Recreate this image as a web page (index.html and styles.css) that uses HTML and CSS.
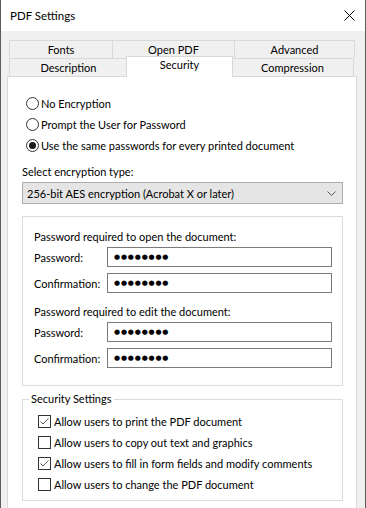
FILE: index.html
```html
<!DOCTYPE html>
<html lang="en">
<head>
    <meta charset="UTF-8">
    <meta name="viewport" content="width=device-width, initial-scale=1.0">
    <title>PDF Settings</title>
    <link rel="stylesheet" href="styles.css">
</head>
<body>
    <div class="window">
        <div class="titlebar">
            <span class="title">PDF Settings</span>
            <svg class="close" width="11" height="11" viewBox="0 0 11 11">
                <path d="M0.5 0.5 L10.5 10.5 M10.5 0.5 L0.5 10.5" stroke="#000" stroke-width="1" fill="none"/>
            </svg>
        </div>

        <div class="content">
            <div class="tab-row">
                <div class="tab tab-fonts">Fonts</div>
                <div class="tab tab-open">Open PDF</div>
                <div class="tab tab-advanced">Advanced</div>
            </div>
            <div class="tab-row">
                <div class="tab tab-description">Description</div>
                <div class="tab tab-security active">Security</div>
                <div class="tab tab-compression">Compression</div>
            </div>

            <div class="panel">
                <div class="option">
                    <span class="radio"></span>
                    <span>No Encryption</span>
                </div>
                <div class="option">
                    <span class="radio"></span>
                    <span>Prompt the User for Password</span>
                </div>
                <div class="option">
                    <span class="radio selected"></span>
                    <span>Use the same passwords for every printed document</span>
                </div>

                <div class="select-label">Select encryption type:</div>
                <div class="dropdown">
                    <span>256-bit AES encryption (Acrobat X or later)</span>
                    <svg width="9" height="5" viewBox="0 0 9 5">
                        <path d="M0.5 0.5 L4.5 4.5 L8.5 0.5" stroke="#555" stroke-width="1" fill="none"/>
                    </svg>
                </div>

                <div class="group">
                    <div class="pw-section">
                        <div class="pw-heading">Password required to open the document:</div>
                        <div class="pw-row">
                            <span class="pw-label">Password:</span>
                            <div class="field"><span class="dots">●●●●●●●●</span></div>
                        </div>
                        <div class="pw-row">
                            <span class="pw-label">Confirmation:</span>
                            <div class="field"><span class="dots">●●●●●●●●</span></div>
                        </div>
                    </div>
                    <div class="pw-section">
                        <div class="pw-heading">Password required to edit the document:</div>
                        <div class="pw-row">
                            <span class="pw-label">Password:</span>
                            <div class="field"><span class="dots">●●●●●●●●</span></div>
                        </div>
                        <div class="pw-row">
                            <span class="pw-label">Confirmation:</span>
                            <div class="field"><span class="dots">●●●●●●●●</span></div>
                        </div>
                    </div>
                </div>

                <fieldset class="settings">
                    <legend>Security Settings</legend>
                    <div class="option check-row">
                        <span class="check"><svg width="11" height="11" viewBox="0 0 11 11"><path d="M1.5 5.5 L4 8 L9.5 2.5" stroke="#5a5a5a" stroke-width="1" fill="none"/></svg></span>
                        <span>Allow users to print the PDF document</span>
                    </div>
                    <div class="option check-row">
                        <span class="check"></span>
                        <span>Allow users to copy out text and graphics</span>
                    </div>
                    <div class="option check-row">
                        <span class="check"><svg width="11" height="11" viewBox="0 0 11 11"><path d="M1.5 5.5 L4 8 L9.5 2.5" stroke="#5a5a5a" stroke-width="1" fill="none"/></svg></span>
                        <span>Allow users to fill in form fields and modify comments</span>
                    </div>
                    <div class="option check-row">
                        <span class="check"></span>
                        <span>Allow users to change the PDF document</span>
                    </div>
                </fieldset>
            </div>
        </div>
    </div>
</body>
</html>
```

FILE: styles.css
```css
* {
    box-sizing: border-box;
}

body {
    margin: 0;
    font-family: 'Lato', sans-serif;
    font-size: 11px;
    color: #000;
    background: #fff;
    white-space: nowrap;
}

.window {
    width: 366px;
    height: 508px;
    border-left: 1px solid #5c5c5c;
    border-right: 1px solid #5c5c5c;
    background: #f0f0f0;
    display: flex;
    flex-direction: column;
    overflow: hidden;
}

.titlebar {
    height: 31px;
    flex-shrink: 0;
    background: #fff;
    display: flex;
    align-items: center;
    justify-content: space-between;
    padding: 0 10px 0 9px;
    font-size: 11.5px;
}

.content {
    flex: 1;
    display: flex;
    flex-direction: column;
    padding: 9px 8px 0 6px;
}

/* tabs */
.tab-row {
    display: flex;
    height: 18px;
    padding-left: 2px;
}

.tab {
    height: 18px;
    border: 1px solid #d9d9d9;
    border-bottom: none;
    background: #f0f0f0;
    text-align: center;
    line-height: 17px;
    margin-left: -1px;
}

.tab-row .tab:first-child {
    margin-left: 0;
}

.tab-fonts { width: 104px; }
.tab-open { width: 123px; }
.tab-advanced { width: 121px; }
.tab-description { width: 119px; }
.tab-compression { width: 123px; }

.tab-security {
    width: 107px;
    margin-left: -2px;
    margin-right: -1px;
}

.tab.active {
    position: relative;
    z-index: 1;
    background: #fff;
    height: 21px;
    margin-top: -2px;
    margin-bottom: -1px;
    line-height: 16px;
    padding-bottom: 3px;
}

/* panel */
.panel {
    flex: 1;
    background: #fff;
    border: 1px solid #d9d9d9;
    border-bottom: none;
    padding: 16px 13px 0 14px;
}

.option {
    display: flex;
    align-items: center;
    height: 21px;
}

.radio {
    width: 13px;
    height: 13px;
    border: 1px solid #333;
    border-radius: 50%;
    margin: 0 2px 0 4px;
    display: flex;
    align-items: center;
    justify-content: center;
}

.radio.selected::after {
    content: '';
    width: 7px;
    height: 7px;
    border-radius: 50%;
    background: #1a1a1a;
}

.select-label {
    margin-top: 8px;
    line-height: 16px;
}

.dropdown {
    margin-top: 2px;
    height: 22px;
    background: #e5e5e5;
    border: 1px solid #adadad;
    display: flex;
    align-items: center;
    justify-content: space-between;
    padding: 0 6px 0 4px;
}

/* password group */
.group {
    margin-top: 12px;
    border: 1px solid #dcdcdc;
    padding: 12px 10px 17px 11px;
}

.pw-section + .pw-section {
    margin-top: 11px;
}

.pw-heading {
    line-height: 16px;
    margin-bottom: 2px;
}

.pw-row {
    display: flex;
    align-items: center;
    height: 20px;
}

.pw-row + .pw-row {
    margin-top: 6px;
}

.pw-label {
    width: 73px;
    flex-shrink: 0;
}

.field {
    flex: 1;
    height: 20px;
    border: 1px solid #7a7a7a;
    background: #fff;
    display: flex;
    align-items: center;
    padding-left: 6px;
}

.dots {
    font-family: 'DejaVu Sans', sans-serif;
    font-size: 7px;
    letter-spacing: 0.8px;
}

/* security settings */
.settings {
    margin: 5px 0 0 0;
    border: 1px solid #dcdcdc;
    padding: 4px 0 5px 6px;
}

.settings legend {
    padding: 0 2px;
    line-height: 16px;
}

.check-row {
    padding-left: 9px;
}

.check {
    width: 13px;
    height: 13px;
    border: 1px solid #333;
    background: #fff;
    margin-right: 3px;
    display: flex;
}
```
